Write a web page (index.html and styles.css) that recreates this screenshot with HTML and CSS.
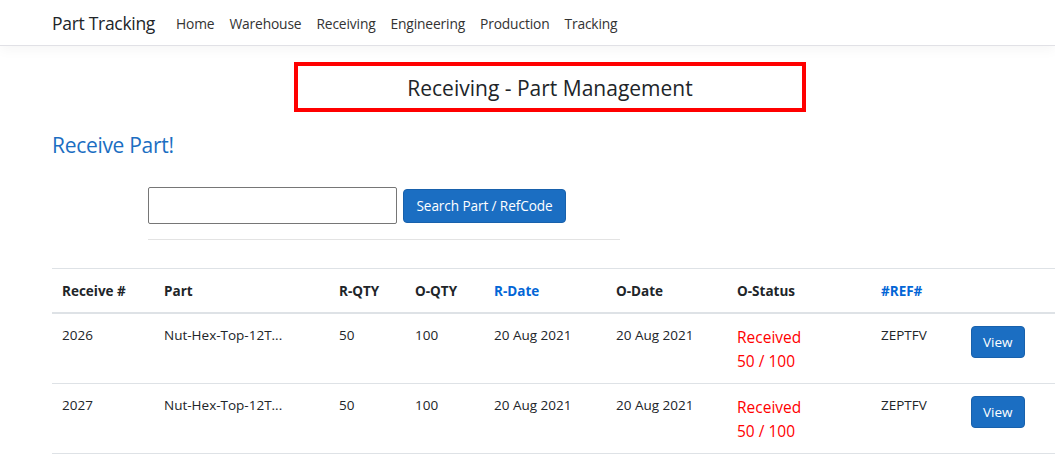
FILE: index.html
```html
<!DOCTYPE html>
<html lang="en">
<head>
<meta charset="utf-8">
<title>Part Tracking</title>
<link rel="stylesheet" href="styles.css">
</head>
<body>
<header class="navbar">
  <a class="brand" href="#">Part Tracking</a>
  <nav class="nav">
    <a href="#">Home</a>
    <a href="#">Warehouse</a>
    <a href="#">Receiving</a>
    <a href="#">Engineering</a>
    <a href="#">Production</a>
    <a href="#">Tracking</a>
  </nav>
</header>
<main class="content">
  <div class="title-box">Receiving - Part Management</div>
  <h3 class="section-title">Receive Part!</h3>
  <div class="search">
    <div class="search-row">
      <input class="search-input" type="text">
      <button class="btn btn-primary btn-search">Search Part / RefCode</button>
    </div>
    <hr class="divider">
  </div>
  <table class="table">
    <colgroup>
      <col class="c1"><col class="c2"><col class="c3"><col class="c4"><col class="c5"><col class="c6"><col class="c7"><col class="c8"><col class="c9">
    </colgroup>
    <thead>
      <tr>
        <th>Receive #</th>
        <th>Part</th>
        <th>R-QTY</th>
        <th>O-QTY</th>
        <th><a href="#">R-Date</a></th>
        <th>O-Date</th>
        <th>O-Status</th>
        <th><a href="#">#REF#</a></th>
        <th></th>
      </tr>
    </thead>
    <tbody>
      <tr>
        <td>2026</td>
        <td>Nut-Hex-Top-12T...</td>
        <td>50</td>
        <td>100</td>
        <td>20 Aug 2021</td>
        <td>20 Aug 2021</td>
        <td class="status">Received<br>50 / 100</td>
        <td>ZEPTFV</td>
        <td><button class="btn btn-primary btn-view">View</button></td>
      </tr>
      <tr>
        <td>2027</td>
        <td>Nut-Hex-Top-12T...</td>
        <td>50</td>
        <td>100</td>
        <td>20 Aug 2021</td>
        <td>20 Aug 2021</td>
        <td class="status">Received<br>50 / 100</td>
        <td>ZEPTFV</td>
        <td><button class="btn btn-primary btn-view">View</button></td>
      </tr>
    </tbody>
  </table>
</main>
</body>
</html>
```

FILE: styles.css
```css
* { box-sizing: border-box; }

html, body {
  margin: 0;
  padding: 0;
  background: #fff;
  color: #212529;
  font-family: "Segoe UI", "Open Sans", "Noto Sans", sans-serif;
  font-size: 16px;
  overflow: hidden;
}

a { text-decoration: none; }

.navbar {
  display: flex;
  align-items: center;
  height: 46px;
  padding-left: 52px;
  border-bottom: 1px solid #e1e1e6;
  box-shadow: 0 4px 12px rgba(0, 0, 0, 0.04);
  position: relative;
}

.brand {
  font-size: 17.5px;
  color: #212529;
  margin-right: 21px;
  letter-spacing: -0.3px;
}

.nav {
  display: flex;
  gap: 15px;
  padding-top: 1px;
}

.nav a {
  font-size: 13.8px;
  color: #333;
  letter-spacing: -0.15px;
}

.content {
  padding: 0 7px 0 52px;
}

.title-box {
  width: 512px;
  height: 50px;
  margin: 16px auto 0;
  padding-top: 2px;
  border: 4px solid #ff0000;
  display: flex;
  align-items: center;
  justify-content: center;
  font-size: 21px;
  color: #212529;
  letter-spacing: 0;
}

.section-title {
  margin: 18px 0 0;
  font-size: 21px;
  font-weight: 400;
  line-height: 30px;
  color: #1b6ec2;
  letter-spacing: -0.3px;
}

.search {
  width: 472px;
  margin: 27px 0 0 96px;
}

.search-row {
  display: flex;
  align-items: center;
  gap: 6px;
}

.search-input {
  width: 249px;
  height: 37px;
  border: 1px solid #767676;
  border-radius: 2px;
  padding: 4px 8px;
  font: inherit;
}

.btn {
  font-family: inherit;
  color: #fff;
  border-radius: 4px;
  cursor: pointer;
}

.btn-primary {
  background: #1b6ec2;
  border: 1px solid #1861ac;
}

.btn-search {
  height: 34px;
  width: 163px;
  font-size: 13.6px;
  padding: 0 10px;
  letter-spacing: -0.1px;
}

.divider {
  margin: 15px 0 0;
  border: 0;
  border-top: 1px solid #e3e3e3;
}

.table {
  width: calc(100% + 7px);
  margin-top: 28px;
  border-collapse: collapse;
  font-size: 13.5px;
  table-layout: fixed;
}

.c1 { width: 102px; }
.c2 { width: 175px; }
.c3 { width: 76px; }
.c4 { width: 79px; }
.c5 { width: 122px; }
.c6 { width: 121px; }
.c7 { width: 144px; }
.c8 { width: 90px; }

.table th,
.table td {
  text-align: left;
  vertical-align: top;
  line-height: 21px;
  padding: 11px 10px 10px;
  border-top: 1px solid #dee2e6;
}

.table th {
  font-weight: 700;
  padding: 12px 10px 10px;
  border-bottom: 2px solid #dee2e6;
  white-space: nowrap;
}

.table th a {
  color: #0366d6;
}

.table td {
  color: #212529;
}

.table tbody tr:last-child td {
  border-bottom: 1px solid #dee2e6;
}

.table td.status {
  font-size: 15.5px;
  line-height: 24px;
  color: #ff0000;
}

.btn-view {
  height: 32px;
  padding: 0 11px;
  font-size: 13.5px;
  margin-top: 1px;
}
```
